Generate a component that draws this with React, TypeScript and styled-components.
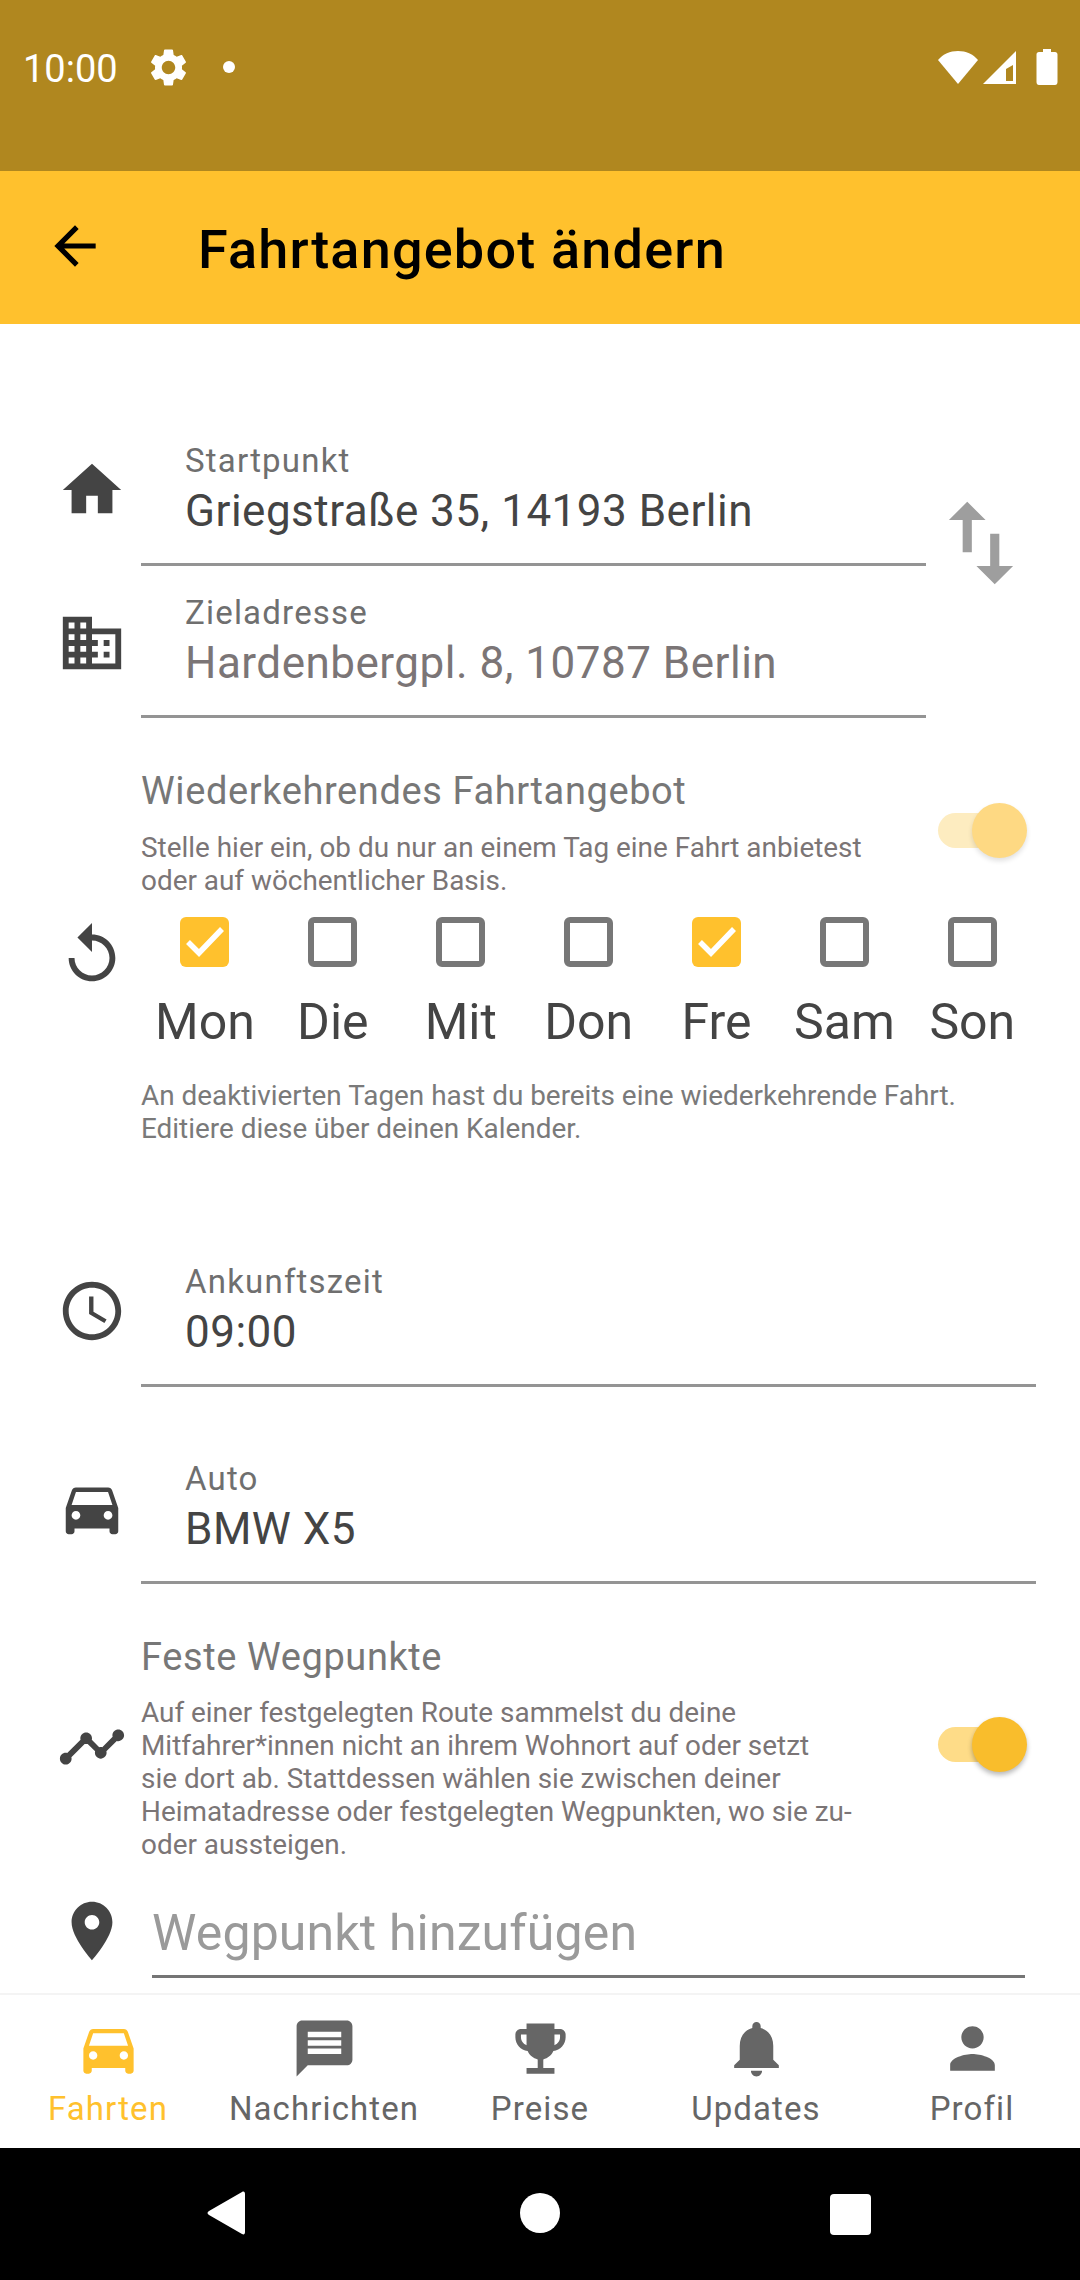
import React from "react"
import styled, { createGlobalStyle } from "styled-components"

const GlobalStyle = createGlobalStyle`
html, body {
  margin: 0;
  padding: 0;
  background: #fff;
  font-family: Roboto, "Liberation Sans", sans-serif;
}
* { box-sizing: border-box; }
`

const Page = styled.div`
width: 1080px;
height: 2280px;
display: flex;
flex-direction: column;
overflow: hidden;
background: #fff;
`

const StatusBar = styled.div`
height: 171px;
flex: none;
background: #b0871f;
color: #fff;
display: flex;
align-items: center;
padding: 0 22px 37px 23px;
`
const Clock = styled.span`
font-size: 38px;
line-height: 44px;
width: 95px;
margin-top: 4px;
white-space: nowrap;
`
const Gear = styled.svg`
width: 45px;
height: 45px;
margin-left: 28px;
fill: #fff;
`
const Dot = styled.span`
width: 12px;
height: 12px;
margin-left: 32px;
border-radius: 50%;
background: #fff;
`
const StatusRight = styled.div`
margin-left: auto;
display: flex;
align-items: center;
`
const StatusGlyph = styled.svg<{ $w: number; $gap?: number }>`
width: ${p => p.$w}px;
height: 36px;
margin-left: ${p => p.$gap || 0}px;
fill: #fff;
`

const Header = styled.header`
height: 153px;
flex: none;
background: #ffc12d;
display: flex;
align-items: center;
padding-left: 44px;
`
const BackIcon = styled.svg`
width: 62px;
height: 62px;
fill: #000;
margin-top: -4px;
`
const Title = styled.h1`
margin: 4px 0 0 92px;
font-size: 54px;
line-height: 62px;
letter-spacing: 1.2px;
font-weight: 500;
color: #000;
white-space: nowrap;
`

const Main = styled.main`
flex: 1;
min-height: 0;
overflow: hidden;
padding-top: 118px;
display: flex;
flex-direction: column;
`
const Row = styled.div<{ $top?: number }>`
display: flex;
align-items: flex-start;
margin-top: ${p => p.$top || 0}px;
`
const IconSlot = styled.div<{ $top?: number }>`
width: 141px;
flex: none;
padding-left: 57px;
margin-top: ${p => p.$top ?? 13}px;
display: flex;
`
const FormIcon = styled.svg<{ $size?: number; $color?: string }>`
width: ${p => p.$size || 70}px;
height: ${p => p.$size || 70}px;
fill: ${p => p.$color || "#444"};
flex: none;
display: block;
`
const Field = styled.div`
flex: 1;
min-width: 0;
padding: 0 0 27px 44px;
border-bottom: 3px solid #949494;
margin-right: 44px;
`
const FieldLabel = styled.div`
font-size: 33px;
line-height: 37px;
letter-spacing: 1.2px;
color: #6f6f6f;
white-space: nowrap;
`
const FieldValue = styled.div<{ $muted?: boolean }>`
margin-top: 7px;
font-size: 44px;
line-height: 50px;
letter-spacing: 0.5px;
color: ${p => (p.$muted ? "#7b7576" : "#444")};
white-space: nowrap;
`
const RouteBlock = styled.div`
display: flex;
align-items: center;
`
const RouteFields = styled.div`
width: 926px;
flex: none;
display: flex;
flex-direction: column;
gap: 28px;
${Field} { margin-right: 0; }
`
const SwapIcon = styled(FormIcon)`
fill: #9e9e9e;
margin-top: -74px;
`

const SwitchText = styled.div`
width: 656px;
flex: none;
`
const SwitchBlock = styled.div<{ $top: number }>`
display: flex;
align-items: flex-start;
margin-top: ${p => p.$top}px;
`
const SectionTitle = styled.div`
font-size: 38px;
line-height: 44px;
letter-spacing: 0.6px;
color: #777;
white-space: nowrap;
`
const Hint = styled.div`
font-size: 27.9px;
line-height: 33px;
color: #7b7576;
white-space: nowrap;
`
const TitleHint = styled(Hint)<{ $top: number }>`
margin-top: ${p => p.$top}px;
`
const Toggle = styled.div<{ $top: number; $dim?: boolean }>`
position: relative;
width: 89px;
height: 55px;
flex: none;
margin: ${p => p.$top}px 0 0 141px;
&::before {
  content: "";
  position: absolute;
  left: 0;
  top: 10px;
  width: 70px;
  height: 35px;
  border-radius: 18px;
  background: ${p => (p.$dim ? "#fdecc0" : "#fedc88")};
}
&::after {
  content: "";
  position: absolute;
  right: 0;
  top: 0;
  width: 55px;
  height: 55px;
  border-radius: 50%;
  background: ${p => (p.$dim ? "#fed983" : "#f9bd2c")};
  box-shadow: 0 3px 5px rgba(0, 0, 0, ${p => (p.$dim ? 0.12 : 0.28)});
}
`

const DaysGrid = styled.div`
display: grid;
grid-template-columns: repeat(7, 127.9px);
`
const Day = styled.div`
display: flex;
flex-direction: column;
align-items: center;
`
const Check = styled.div<{ $on?: boolean }>`
width: 49px;
height: 50px;
border-radius: 6px;
display: flex;
align-items: center;
justify-content: center;
background: ${p => (p.$on ? "#ffc12d" : "#fff")};
border: ${p => (p.$on ? "none" : "6px solid #777")};
`
const CheckMark = styled.svg`
width: 49px;
height: 50px;
fill: none;
stroke: #fff;
stroke-width: 5.5;
`
const DayLabel = styled.div`
margin-top: 27px;
font-size: 50px;
line-height: 56px;
color: #444;
white-space: nowrap;
`
const Note = styled(Hint)`
margin: 29px 0 0 141px;
color: #7a7a7a;
`

const WaypointField = styled.div`
flex: 1;
margin: 0 55px 0 11px;
padding-bottom: 14px;
border-bottom: 3px solid #757575;
font-size: 50px;
line-height: 56px;
letter-spacing: 0.15px;
color: #9a9a9a;
white-space: nowrap;
`

const BottomNav = styled.nav`
height: 155px;
flex: none;
border-top: 2px solid #f4f4f4;
padding-top: 20px;
display: grid;
grid-template-columns: repeat(5, 1fr);
background: #fff;
`
const Tab = styled.div<{ $active?: boolean }>`
display: flex;
flex-direction: column;
align-items: center;
color: ${p => (p.$active ? "#ffc12d" : "#666")};
`
const TabIcon = styled.svg`
width: 67px;
height: 67px;
fill: currentColor;
`
const TabLabel = styled.div`
margin-top: 8px;
font-size: 33px;
line-height: 37px;
letter-spacing: 1.1px;
white-space: nowrap;
`

const SystemNav = styled.div`
height: 132px;
flex: none;
background: #000;
position: relative;
display: flex;
align-items: center;
justify-content: center;
padding-bottom: 2px;
`
const NavBack = styled.svg`
position: absolute;
left: 204px;
top: 42px;
width: 44px;
height: 46px;
fill: #fff;
`
const NavHome = styled.span`
width: 40px;
height: 40px;
border-radius: 50%;
background: #fff;
`
const NavRecent = styled.span`
position: absolute;
left: 830px;
top: 46px;
width: 41px;
height: 41px;
border-radius: 4px;
background: #fff;
`

const paths = {
  home: "M10 20v-6h4v6h5v-8h3L12 3 2 12h3v8z",
  domain: "M12 7V3H2v18h20V7H12zM6 19H4v-2h2v2zm0-4H4v-2h2v2zm0-4H4V9h2v2zm0-4H4V5h2v2zm4 12H8v-2h2v2zm0-4H8v-2h2v2zm0-4H8V9h2v2zm0-4H8V5h2v2zm10 12h-8v-2h2v-2h-2v-2h2v-2h-2V9h8v10zm-2-8h-2v2h2v-2zm0 4h-2v2h2v-2z",
  swap: "M16 17.01V10h-2v7.01h-3L15 21l4-3.99h-3zM9 3L5 6.99h3V14h2V6.99h3L9 3z",
  replay: "M12 5V1L7 6l5 5V7c3.31 0 6 2.69 6 6s-2.69 6-6 6-6-2.69-6-6H4c0 4.42 3.58 8 8 8s8-3.58 8-8-3.58-8-8-8z",
  clock: "M11.99 2C6.47 2 2 6.48 2 12s4.47 10 9.99 10C17.52 22 22 17.52 22 12S17.52 2 11.99 2zM12 20c-4.42 0-8-3.58-8-8s3.58-8 8-8 8 3.58 8 8-3.58 8-8 8zm.5-13H11v6l5.25 3.15.75-1.23-4.5-2.67z",
  car: "M18.92 6.01C18.72 5.42 18.16 5 17.5 5h-11c-.66 0-1.21.42-1.42 1.01L3 12v8c0 .55.45 1 1 1h1c.55 0 1-.45 1-1v-1h12v1c0 .55.45 1 1 1h1c.55 0 1-.45 1-1v-8l-2.08-5.99zM6.5 16c-.83 0-1.5-.67-1.5-1.5S5.67 13 6.5 13s1.5.67 1.5 1.5S7.33 16 6.5 16zm11 0c-.83 0-1.5-.67-1.5-1.5s.67-1.5 1.5-1.5 1.5.67 1.5 1.5-.67 1.5-1.5 1.5zM5 11l1.5-4.5h11L19 11H5z",
  timeline: "M23 8c0 1.1-.9 2-2 2-.18 0-.35-.02-.51-.07l-3.56 3.55c.05.16.07.34.07.52 0 1.1-.9 2-2 2s-2-.9-2-2c0-.18.02-.36.07-.52l-2.55-2.55c-.16.05-.34.07-.52.07s-.36-.02-.52-.07l-4.55 4.56c.05.16.07.33.07.51 0 1.1-.9 2-2 2s-2-.9-2-2 .9-2 2-2c.18 0 .35.02.51.07l4.56-4.55C8.02 9.36 8 9.18 8 9c0-1.1.9-2 2-2s2 .9 2 2c0 .18-.02.36-.07.52l2.55 2.55c.16-.05.34-.07.52-.07s.36.02.52.07l3.55-3.56C19.02 8.35 19 8.18 19 8c0-1.1.9-2 2-2s2 .9 2 2z",
  place: "M12 2C8.13 2 5 5.13 5 9c0 5.25 7 13 7 13s7-7.75 7-13c0-3.87-3.13-7-7-7zm0 9.5c-1.38 0-2.5-1.12-2.5-2.5s1.12-2.5 2.5-2.5 2.5 1.12 2.5 2.5-1.12 2.5-2.5 2.5z",
  message: "M20 2H4c-1.1 0-1.99.9-1.99 2L2 22l4-4h14c1.1 0 2-.9 2-2V4c0-1.1-.9-2-2-2zm-2 12H6v-2h12v2zm0-3H6V9h12v2zm0-3H6V6h12v2z",
  trophy: "M19 5h-2V3H7v2H5c-1.1 0-2 .9-2 2v1c0 2.55 1.92 4.63 4.39 4.94.63 1.5 1.98 2.63 3.61 2.96V19H7v2h10v-2h-4v-3.1c1.63-.33 2.98-1.46 3.61-2.96C19.08 12.63 21 10.55 21 8V7c0-1.1-.9-2-2-2zM5 8V7h2v3.82C5.84 10.4 5 9.3 5 8zm14 0c0 1.3-.84 2.4-2 2.82V7h2v1z",
  bell: "M12 22c1.1 0 2-.9 2-2h-4c0 1.1.89 2 2 2zm6-6v-5c0-3.07-1.64-5.64-4.5-6.32V4c0-.83-.67-1.5-1.5-1.5s-1.5.67-1.5 1.5v.68C7.63 5.36 6 7.92 6 11v5l-2 2v1h16v-1l-2-2z",
  person: "M12 12c2.21 0 4-1.79 4-4s-1.79-4-4-4-4 1.79-4 4 1.79 4 4 4zm0 2c-2.67 0-8 1.34-8 4v2h16v-2c0-2.66-5.33-4-8-4z",
  settings: "M19.14 12.94c.04-.3.06-.61.06-.94 0-.32-.02-.64-.07-.94l2.03-1.58c.18-.14.23-.41.12-.61l-1.92-3.32c-.12-.22-.37-.29-.59-.22l-2.39.96c-.5-.38-1.03-.7-1.62-.94l-.36-2.54c-.04-.24-.24-.41-.48-.41h-3.84c-.24 0-.43.17-.47.41l-.36 2.54c-.59.24-1.13.57-1.62.94l-2.39-.96c-.22-.08-.47 0-.59.22L2.74 8.87c-.12.21-.08.47.12.61l2.03 1.58c-.05.3-.09.63-.09.94s.02.64.07.94l-2.03 1.58c-.18.14-.23.41-.12.61l1.92 3.32c.12.22.37.29.59.22l2.39-.96c.5.38 1.03.7 1.62.94l.36 2.54c.05.24.24.41.48.41h3.84c.24 0 .44-.17.47-.41l.36-2.54c.59-.24 1.13-.56 1.62-.94l2.39.96c.22.08.47 0 .59-.22l1.92-3.32c.12-.22.07-.47-.12-.61l-2.01-1.58zM12 15.6c-1.98 0-3.6-1.62-3.6-3.6s1.62-3.6 3.6-3.6 3.6 1.62 3.6 3.6-1.62 3.6-3.6 3.6z",
  back: "M20 11H7.83l5.59-5.59L12 4l-8 8 8 8 1.41-1.41L7.83 13H20v-2z",
}

const days = [
  { name: "Mon", on: true },
  { name: "Die" },
  { name: "Mit" },
  { name: "Don" },
  { name: "Fre", on: true },
  { name: "Sam" },
  { name: "Son" },
]

const tabs = [
  { name: "Fahrten", icon: paths.car, active: true },
  { name: "Nachrichten", icon: paths.message },
  { name: "Preise", icon: paths.trophy },
  { name: "Updates", icon: paths.bell },
  { name: "Profil", icon: paths.person },
]

function Icon({ d, size, color }: { d: string; size?: number; color?: string }) {
  return (
    <FormIcon viewBox="0 0 24 24" $size={size} $color={color}>
      <path d={d} />
    </FormIcon>
  )
}

export default function App() {
  return (
    <Page>
      <GlobalStyle />
      <StatusBar>
        <Clock>10:00</Clock>
        <Gear viewBox="0 0 24 24"><path d={paths.settings} /></Gear>
        <Dot />
        <StatusRight>
          <StatusGlyph $w={42} viewBox="0 0 42 36"><path d="M21 35 L41 11 C36 5 29 2 21 2 C13 2 6 5 1 11 Z" /></StatusGlyph>
          <StatusGlyph $w={34} $gap={3} viewBox="0 0 34 36">
            <path fillRule="evenodd" d="M34 2 V35 H1 Z M24 20 L31 16 V32 H24 Z" />
          </StatusGlyph>
          <StatusGlyph $w={22} $gap={20} viewBox="0 0 22 36">
            <path d="M7 0 H15 V3 H19 C20.5 3 21.5 4 21.5 5.5 V33 C21.5 35 20.5 36 19 36 H3 C1.5 36 .5 35 .5 33 V5.5 C.5 4 1.5 3 3 3 H7 Z" />
          </StatusGlyph>
        </StatusRight>
      </StatusBar>

      <Header>
        <BackIcon viewBox="0 0 24 24"><path d={paths.back} /></BackIcon>
        <Title>Fahrtangebot ändern</Title>
      </Header>

      <Main>
        <RouteBlock>
          <RouteFields>
            <Row>
              <IconSlot><Icon d={paths.home} /></IconSlot>
              <Field>
                <FieldLabel>Startpunkt</FieldLabel>
                <FieldValue>Griegstraße 35, 14193 Berlin</FieldValue>
              </Field>
            </Row>
            <Row>
              <IconSlot $top={14}><Icon d={paths.domain} /></IconSlot>
              <Field>
                <FieldLabel>Zieladresse</FieldLabel>
                <FieldValue $muted>Hardenbergpl. 8, 10787 Berlin</FieldValue>
              </Field>
            </Row>
          </RouteFields>
          <SwapIcon viewBox="0 0 24 24" $size={110}><path d={paths.swap} /></SwapIcon>
        </RouteBlock>

        <SwitchBlock $top={51}>
          <IconSlot />
          <SwitchText>
            <SectionTitle>Wiederkehrendes Fahrtangebot</SectionTitle>
            <TitleHint $top={18}>
              Stelle hier ein, ob du nur an einem Tag eine Fahrt anbietest<br />
              oder auf wöchentlicher Basis.
            </TitleHint>
          </SwitchText>
          <Toggle $top={34} $dim />
        </SwitchBlock>

        <Row $top={20}>
          <IconSlot $top={3}><Icon d={paths.replay} /></IconSlot>
          <DaysGrid>
            {days.map(day => (
              <Day key={day.name}>
                <Check $on={day.on}>
                  {day.on && <CheckMark viewBox="0 0 49 50"><path d="M8 25 L19 36 L42 12" /></CheckMark>}
                </Check>
                <DayLabel>{day.name}</DayLabel>
              </Day>
            ))}
          </DaysGrid>
        </Row>
        <Note>
          An deaktivierten Tagen hast du bereits eine wiederkehrende Fahrt.<br />
          Editiere diese über deinen Kalender.
        </Note>

        <Row $top={118}>
          <IconSlot><Icon d={paths.clock} /></IconSlot>
          <Field>
            <FieldLabel>Ankunftszeit</FieldLabel>
            <FieldValue>09:00</FieldValue>
          </Field>
        </Row>
        <Row $top={73}>
          <IconSlot $top={13}><Icon d={paths.car} /></IconSlot>
          <Field>
            <FieldLabel>Auto</FieldLabel>
            <FieldValue>BMW X5</FieldValue>
          </Field>
        </Row>

        <SwitchBlock $top={51}>
          <IconSlot $top={77}><Icon d={paths.timeline} /></IconSlot>
          <SwitchText>
            <SectionTitle>Feste Wegpunkte</SectionTitle>
            <TitleHint $top={17}>
              Auf einer festgelegten Route sammelst du deine<br />
              Mitfahrer*innen nicht an ihrem Wohnort auf oder setzt<br />
              sie dort ab. Stattdessen wählen sie zwischen deiner<br />
              Heimatadresse oder festgelegten Wegpunkten, wo sie zu-<br />
              oder aussteigen.
            </TitleHint>
          </SwitchText>
          <Toggle $top={82} />
        </SwitchBlock>

        <Row $top={44}>
          <IconSlot $top={-9}><Icon d={paths.place} /></IconSlot>
          <WaypointField>Wegpunkt hinzufügen</WaypointField>
        </Row>
      </Main>

      <BottomNav>
        {tabs.map(tab => (
          <Tab key={tab.name} $active={tab.active}>
            <TabIcon viewBox="0 0 24 24"><path d={tab.icon} /></TabIcon>
            <TabLabel>{tab.name}</TabLabel>
          </Tab>
        ))}
      </BottomNav>

      <SystemNav>
        <NavBack viewBox="0 0 44 46">
          <path d="M38 2 C40 1 41 2 41 4 V42 C41 44 40 45 38 44 L5 25 C3 24 3 22 5 21 Z" />
        </NavBack>
        <NavHome />
        <NavRecent />
      </SystemNav>
    </Page>
  )
}
